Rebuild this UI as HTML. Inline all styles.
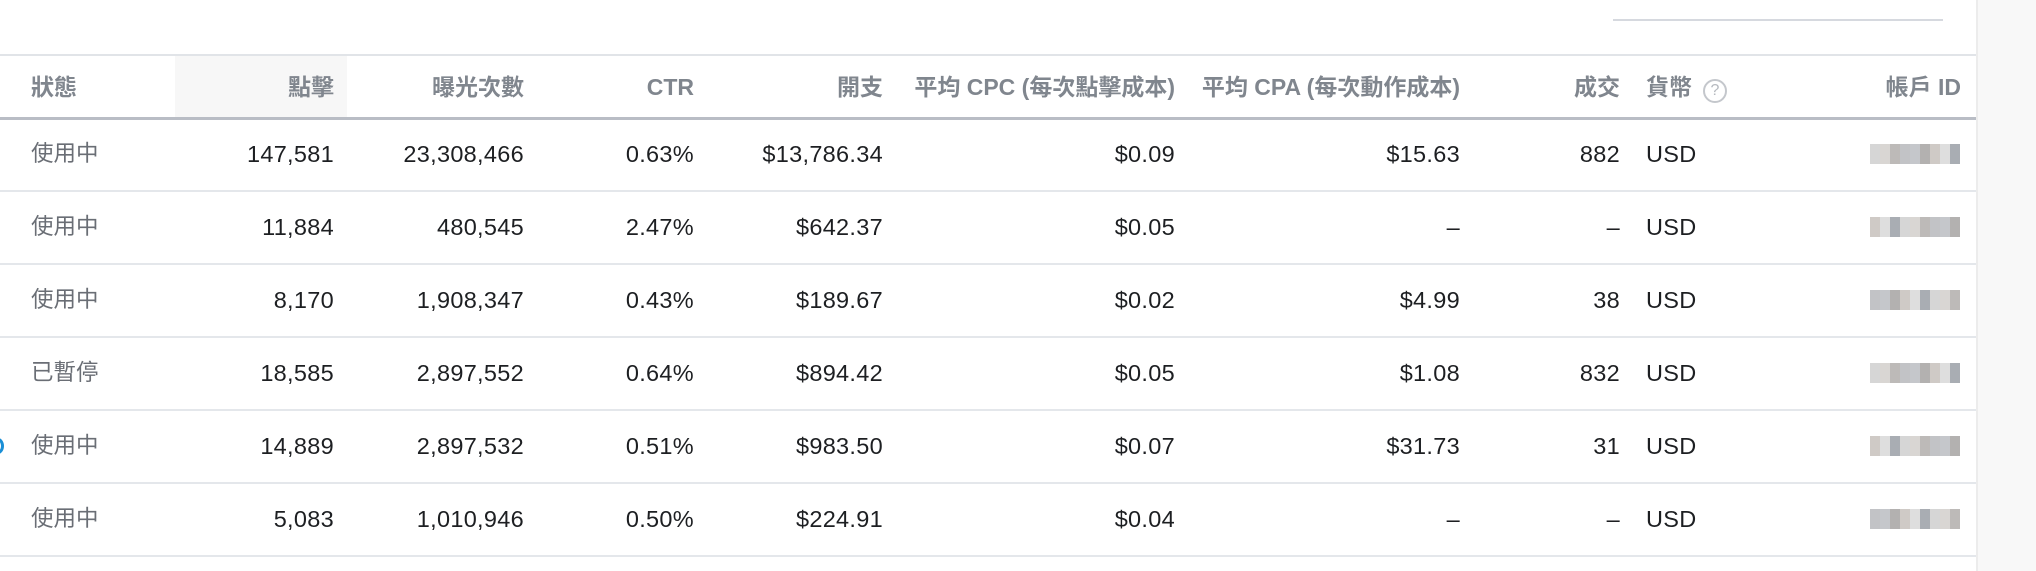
<!DOCTYPE html>
<html><head><meta charset="utf-8"><style>
*{margin:0;padding:0;box-sizing:border-box}
body{width:2036px;height:571px;background:#fff;position:relative;overflow:hidden;font-family:"Liberation Sans","Noto Sans CJK TC",sans-serif}
.sb{position:absolute;left:1976px;top:0;width:60px;height:571px;background:#f8f8f8;border-left:2px solid #ececec}
.ln{position:absolute;left:0;width:1976px;height:2px;background:#e4e7eb}
.h{position:absolute;top:73px;font-size:23px;font-weight:bold;color:#80868e;white-space:nowrap;line-height:28px}
.c{position:absolute;font-size:23.5px;color:#1d1f22;white-space:nowrap;line-height:26px;letter-spacing:0.3px}
.s{color:#6a6e75;font-size:22.5px;letter-spacing:0}
.r{text-align:right}
.m{position:absolute;height:20px;display:flex}
.m i{display:block;width:10px;height:10px}
</style></head><body>
<div class="sb"></div>
<div style="position:absolute;left:1613px;top:19px;width:330px;height:2px;background:#d6d9df"></div>
<div style="position:absolute;left:175px;top:56px;width:172px;height:61px;background:#f7f7f7"></div>
<div class="ln" style="top:54px;background:#e1e4e8"></div>
<div class="ln" style="top:117px;background:#b9bdc5;height:3px"></div>
<div class="ln" style="top:190px"></div>
<div class="ln" style="top:263px"></div>
<div class="ln" style="top:336px"></div>
<div class="ln" style="top:409px"></div>
<div class="ln" style="top:482px"></div>
<div class="ln" style="top:555px"></div>
<div style="position:absolute;left:-8px;top:438px;width:12px;height:16px;border-radius:50%;border:3px solid #1a8fd6"></div>

<div class="h" style="left:31px">狀態</div>
<div class="h" style="right:1702px">點擊</div>
<div class="h" style="right:1512px">曝光次數</div>
<div class="h" style="right:1342px">CTR</div>
<div class="h" style="right:1153px">開支</div>
<div class="h" style="right:861px">平均 CPC (每次點擊成本)</div>
<div class="h" style="right:576px">平均 CPA (每次動作成本)</div>
<div class="h" style="right:416px">成交</div>
<div class="h" style="left:1646px">貨幣</div>
<div style="position:absolute;left:1703px;top:79px;width:24px;height:24px;border:2px solid #c4c7cc;border-radius:50%;color:#b5b9bf;font-size:16px;text-align:center;line-height:20px">?</div>
<div class="h" style="right:75px">帳戶 ID</div>

<div id="rows"></div>
<script>
var d=[["使用中","147,581","23,308,466","0.63%","$13,786.34","$0.09","$15.63","882"],
["使用中","11,884","480,545","2.47%","$642.37","$0.05","–","–"],
["使用中","8,170","1,908,347","0.43%","$189.67","$0.02","$4.99","38"],
["已暫停","18,585","2,897,552","0.64%","$894.42","$0.05","$1.08","832"],
["使用中","14,889","2,897,532","0.51%","$983.50","$0.07","$31.73","31"],
["使用中","5,083","1,010,946","0.50%","$224.91","$0.04","–","–"]];
var R=[1702,1512,1342,1153,861,576,416],h="";
var g=["#d6d6d6","#bdbab8","#c5c7cb","#cfcac6","#a9adb3","#d9d6d3","#c2c3c6","#b3b1b0","#dedede"];
d.forEach(function(r,i){var t=141+i*73;
h+='<div class="c s" style="left:31px;top:'+t+'px">'+r[0]+'</div>';
for(var k=1;k<8;k++)h+='<div class="c r" style="right:'+R[k-1]+'px;top:'+t+'px">'+r[k]+'</div>';
h+='<div class="c" style="left:1646px;top:'+t+'px">USD</div>';
h+='<div class="m" style="left:1870px;top:'+(t+3)+'px;flex-wrap:wrap;width:92px">';
for(var j=0;j<18;j++)h+='<i style="background:'+g[(j*5+i*3)%9]+'"></i>';
h+='</div>';});
document.getElementById("rows").innerHTML=h;
</script>
</body></html>
